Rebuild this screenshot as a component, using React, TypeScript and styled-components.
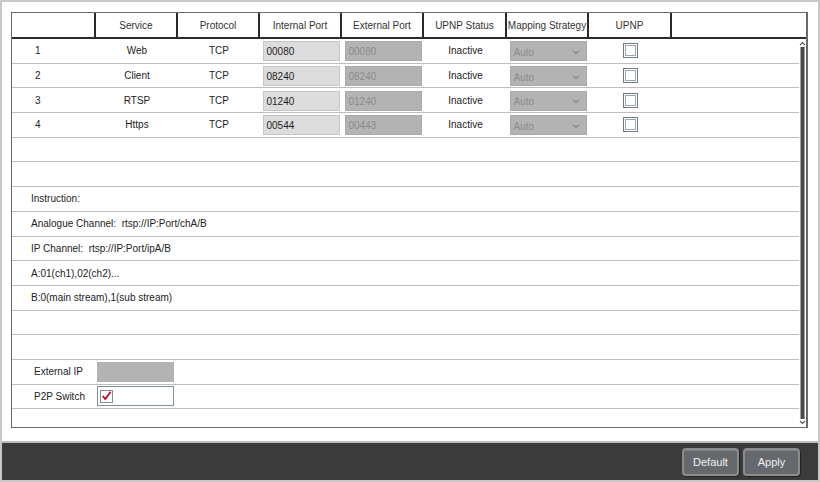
import styled, { createGlobalStyle } from 'styled-components';

const GlobalStyle = createGlobalStyle`
  html, body {
    margin: 0;
    padding: 0;
    background: #ffffff;
  }
  body {
    font-family: 'Liberation Sans', Arial, sans-serif;
    font-size: 10px;
    color: #222;
  }
`;

const COLUMNS = '84px 82px 82px 82px 82px 83px 82px 83px 1fr';
const ROW_HEIGHT = 24.7;

const headers = [
  '',
  'Service',
  'Protocol',
  'Internal Port',
  'External Port',
  'UPNP Status',
  'Mapping Strategy',
  'UPNP',
  '',
];

const services = [
  { id: 1, name: 'Web', internal: '00080', external: '00080' },
  { id: 2, name: 'Client', internal: '08240', external: '08240' },
  { id: 3, name: 'RTSP', internal: '01240', external: '01240' },
  { id: 4, name: 'Https', internal: '00544', external: '00443' },
];

const instructions = [
  'Instruction:',
  'Analogue Channel:  rtsp://IP:Port/chA/B',
  'IP Channel:  rtsp://IP:Port/ipA/B',
  'A:01(ch1),02(ch2)...',
  'B:0(main stream),1(sub stream)',
];

const Chevron = () => (
  <svg width="8" height="5" viewBox="0 0 8 5">
    <polyline points="1,1 4,3.5 7,1" fill="none" stroke="#8a8a8a" strokeWidth="1.3" />
  </svg>
);

const Caret = ({ up }: { up?: boolean }) => (
  <svg width="7" height="5" viewBox="0 0 7 5">
    <polyline
      points={up ? '1,4 3.5,1.5 6,4' : '1,1 3.5,3.5 6,1'}
      fill="none"
      stroke="#555"
      strokeWidth="1.1"
    />
  </svg>
);

const App = () => {
  return (
    <Window>
      <GlobalStyle />
      <Content>
        <Panel>
          <HeaderRow>
            {headers.map((h, i) => (
              <HeaderCell key={i} $last={i === headers.length - 1}>
                {h}
              </HeaderCell>
            ))}
          </HeaderRow>
          <Body>
            <Rows>
              {services.map((s) => (
                <DataRow key={s.id}>
                  <IndexCell>{s.id}</IndexCell>
                  <Cell>{s.name}</Cell>
                  <Cell>TCP</Cell>
                  <Cell>
                    <PortInput>{s.internal}</PortInput>
                  </Cell>
                  <Cell>
                    <PortInput $disabled>{s.external}</PortInput>
                  </Cell>
                  <Cell>Inactive</Cell>
                  <Cell>
                    <Select>
                      <span>Auto</span>
                      <Chevron />
                    </Select>
                  </Cell>
                  <Cell>
                    <CheckBox />
                  </Cell>
                  <Cell />
                </DataRow>
              ))}
              <Row />
              <Row />
              {instructions.map((t) => (
                <TextRow key={t}>{t}</TextRow>
              ))}
              <Row />
              <Row />
              <FieldRow>
                <FieldLabel>External IP</FieldLabel>
                <FieldBox />
              </FieldRow>
              <FieldRow>
                <FieldLabel>P2P Switch</FieldLabel>
                <FieldBox $white>
                  <SmallCheck>
                    <svg width="13" height="12" viewBox="0 0 13 12">
                      <polyline
                        points="2,6 5,9.5 11.5,1"
                        fill="none"
                        stroke="#b3132f"
                        strokeWidth="2.2"
                      />
                    </svg>
                  </SmallCheck>
                </FieldBox>
              </FieldRow>
              <Row />
            </Rows>
            <ScrollBar>
              <Caret up />
              <Thumb />
              <Caret />
            </ScrollBar>
          </Body>
        </Panel>
      </Content>
      <BottomBar>
        <Button>Default</Button>
        <Button>Apply</Button>
      </BottomBar>
    </Window>
  );
};

const Window = styled.div`
  width: 820px;
  height: 482px;
  box-sizing: border-box;
  border: 2px solid #c8c8c8;
  display: flex;
  flex-direction: column;
  background: #fff;
`;

const Content = styled.div`
  flex: 1;
  padding: 10px 10px 13px 9px;
  display: flex;
  min-height: 0;
`;

const Panel = styled.div`
  flex: 1;
  display: flex;
  flex-direction: column;
  border: 1px solid #6a6a6a;
  border-right-width: 2px;
  min-height: 0;
`;

const HeaderRow = styled.div`
  display: grid;
  grid-template-columns: ${COLUMNS};
  height: 26px;
  box-sizing: border-box;
  border-bottom: 2px solid #2a2a2a;
`;

const HeaderCell = styled.div<{ $last?: boolean }>`
  display: flex;
  align-items: center;
  justify-content: center;
  color: #333;
  border-right: ${(p) => (p.$last ? 'none' : '2px solid #2a2a2a')};
  white-space: nowrap;
`;

const Body = styled.div`
  flex: 1;
  display: flex;
  min-height: 0;
  overflow: hidden;
`;

const Rows = styled.div`
  flex: 1;
  display: flex;
  flex-direction: column;
`;

const Row = styled.div`
  flex: 0 0 ${ROW_HEIGHT}px;
  box-sizing: border-box;
  border-bottom: 1.5px solid #bdbdbd;
`;

const DataRow = styled(Row)`
  display: grid;
  grid-template-columns: ${COLUMNS};
  align-items: center;
`;

const Cell = styled.div`
  display: flex;
  align-items: center;
  justify-content: center;
  height: 100%;
  color: #222;
`;

const IndexCell = styled(Cell)`
  justify-content: flex-start;
  padding-left: 23px;
`;

const PortInput = styled.div<{ $disabled?: boolean }>`
  width: 77px;
  height: 20px;
  box-sizing: border-box;
  margin-top: 1px;
  padding: 4px 0 0 3px;
  background: ${(p) => (p.$disabled ? '#b3b3b3' : '#dcdcdc')};
  border: 1px solid ${(p) => (p.$disabled ? '#a9a9a9' : '#c6c6c6')};
  color: ${(p) => (p.$disabled ? '#8c8c8c' : '#1e1e1e')};
`;

const Select = styled.div`
  width: 77px;
  height: 20px;
  box-sizing: border-box;
  margin-top: 1px;
  padding: 2px 6px 0 3px;
  background: #b3b3b3;
  border: 1px solid #a9a9a9;
  color: #8c8c8c;
  display: flex;
  align-items: center;
  justify-content: space-between;
`;

const CheckBox = styled.div`
  width: 15px;
  height: 15px;
  box-sizing: border-box;
  border: 1px solid #6c7b8a;
  background: #fff;
  box-shadow: inset 0 0 0 1px #fff, inset 0 0 0 2px #9aa6b2;
`;

const TextRow = styled(Row)`
  display: flex;
  align-items: center;
  padding-left: 19px;
  white-space: pre;
  color: #222;
`;

const FieldRow = styled(Row)`
  display: flex;
  align-items: center;
  padding-left: 22px;
`;

const FieldLabel = styled.div`
  width: 63px;
  color: #222;
`;

const FieldBox = styled.div<{ $white?: boolean }>`
  width: 77px;
  height: 20px;
  box-sizing: border-box;
  background: ${(p) => (p.$white ? '#fff' : '#b3b3b3')};
  border: 1px solid ${(p) => (p.$white ? '#7f8f9e' : '#b3b3b3')};
  display: flex;
  align-items: center;
  padding-left: 2px;
`;

const SmallCheck = styled.div`
  width: 13px;
  height: 13px;
  box-sizing: border-box;
  border: 1px solid #8a8a8a;
  background: #fff;
  display: flex;
  align-items: center;
  justify-content: center;
`;

const ScrollBar = styled.div`
  width: 7px;
  display: flex;
  flex-direction: column;
  align-items: center;
  padding: 2px 0 2px;
  gap: 1px;
`;

const Thumb = styled.div`
  flex: 1;
  width: 3px;
  background: #4a4a4a;
  border-left: 1px solid #a0a0a0;
  border-right: 1px solid #a0a0a0;
`;

const BottomBar = styled.div`
  height: 39px;
  box-sizing: border-box;
  background: #3b3b3b;
  border-top: 2px solid #bdbdbd;
  display: flex;
  justify-content: flex-end;
  align-items: flex-start;
  gap: 4px;
  padding: 5px 18px 0 0;
`;

const Button = styled.div`
  width: 57px;
  height: 28px;
  box-sizing: border-box;
  border: 2px solid #8c8c8c;
  border-radius: 4px;
  background: #65686d;
  box-shadow: inset 0 1px 0 #7e8186, 1px 1px 1px #222;
  color: #f0f0f0;
  font-size: 11px;
  display: flex;
  align-items: center;
  justify-content: center;
`;

export default App;
